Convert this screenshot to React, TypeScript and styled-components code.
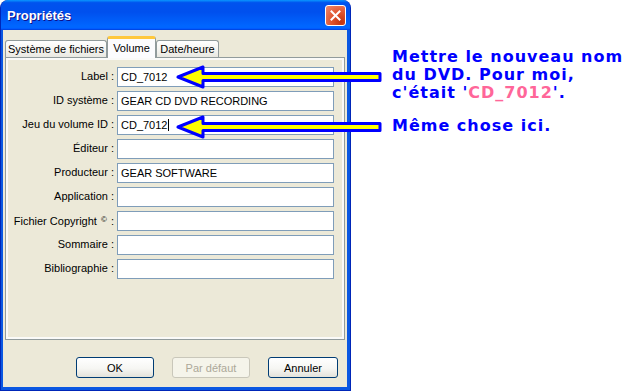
import React from "react";
import styled, { createGlobalStyle } from "styled-components";

const GlobalStyle = createGlobalStyle`
  html, body { margin: 0; padding: 0; background: #fff; }
  body { font-family: "Liberation Sans", Arial, sans-serif; }
`;

const Page = styled.div`
  position: relative;
  width: 624px;
  height: 392px;
  display: flex;
  align-items: flex-start;
  background: #fff;
  overflow: hidden;
`;

const Window = styled.div`
  width: 351px;
  height: 391px;
  box-sizing: border-box;
  display: flex;
  flex-direction: column;
  border-radius: 8px 8px 0 0;
  border: 1px solid #0026b8;
  border-top: none;
  background: #0a57e2;
  overflow: hidden;
`;

const TitleBar = styled.div`
  height: 30px;
  flex: none;
  display: flex;
  align-items: center;
  justify-content: space-between;
  padding: 0 4px 0 6px;
  border-radius: 7px 7px 0 0;
  background: linear-gradient(
    to bottom,
    #0997ff 0%,
    #0053ee 9%,
    #0050ee 40%,
    #0066ff 86%,
    #0066ff 92%,
    #005bff 95%,
    #003dd7 100%
  );
`;

const Title = styled.span`
  color: #fff;
  font: bold 13px "Liberation Sans", Arial, sans-serif;
  text-shadow: 1px 1px 0 #0f1089;
`;

const CloseButton = styled.div`
  width: 21px;
  height: 21px;
  box-sizing: border-box;
  border: 1px solid #fff;
  border-radius: 3px;
  background: radial-gradient(circle at 80% 85%, #c23410 0%, #e0552f 45%, #ef8a70 100%);
  display: flex;
  align-items: center;
  justify-content: center;
`;

const Client = styled.div`
  flex: 1;
  margin: 0 3px 3px 2px;
  background: #ece9d8;
  display: flex;
  flex-direction: column;
`;

const Tabs = styled.div`
  height: 21px;
  display: flex;
  align-items: flex-end;
  padding: 6px 0 0 2px;
  position: relative;
  z-index: 1;
`;

const Tab = styled.div<{ $active?: boolean; $w: number }>`
  width: ${(p) => p.$w}px;
  box-sizing: border-box;
  height: ${(p) => (p.$active ? 22 : 17)}px;
  margin-bottom: ${(p) => (p.$active ? -1 : 0)}px;
  display: flex;
  align-items: center;
  justify-content: center;
  font-size: 11px;
  color: #000;
  border: 1px solid #919b9c;
  border-bottom: none;
  border-radius: 3px 3px 0 0;
  padding-bottom: ${(p) => (p.$active ? 2 : 0)}px;
  background: ${(p) =>
    p.$active
      ? "#fcfcfe"
      : "linear-gradient(to bottom, #ffffff 0%, #f3f3ef 60%, #e9e8e1 100%)"};
  border-top: ${(p) => (p.$active ? "3px solid #ffc83c" : "1px solid #919b9c")};
  white-space: nowrap;
`;

const Panel = styled.div`
  height: 283px;
  margin: 0 2px;
  box-sizing: border-box;
  border: 1px solid #919b9c;
  background: #ece9d8;
  box-shadow: inset 0 0 0 2px #fafaf8;
`;

const Form = styled.div`
  display: grid;
  grid-template-columns: 108px 217px;
  grid-auto-rows: 20px;
  column-gap: 3px;
  row-gap: 4px;
  padding-top: 9px;
`;

const Label = styled.div`
  font-size: 11px;
  line-height: 18px;
  text-align: right;
  white-space: nowrap;
  color: #000;
`;

const Sup = styled.span`
  font-size: 8px;
  vertical-align: 3px;
  margin: 0 1px;
`;

const Field = styled.div`
  box-sizing: border-box;
  border: 1px solid #7f9db9;
  background: #fff;
  font-size: 11px;
  line-height: 18px;
  padding-left: 3px;
  color: #000;
  white-space: nowrap;
`;

const Caret = styled.span`
  display: inline-block;
  width: 1px;
  height: 12px;
  background: #000;
  vertical-align: -2px;
  margin-left: 1px;
`;

const ButtonRow = styled.div`
  display: flex;
  justify-content: flex-end;
  gap: 18px;
  margin-top: 17px;
  padding-right: 9px;
`;

const Button = styled.div<{ $w: number; $disabled?: boolean }>`
  width: ${(p) => p.$w}px;
  height: 21px;
  box-sizing: border-box;
  border: 1px solid ${(p) => (p.$disabled ? "#c9c7ba" : "#003c74")};
  border-radius: 3px;
  background: ${(p) =>
    p.$disabled
      ? "#f5f4ea"
      : "linear-gradient(to bottom, #ffffff 0%, #f6f6f3 55%, #e3e2da 100%)"};
  color: ${(p) => (p.$disabled ? "#aca899" : "#000")};
  font-size: 11px;
  display: flex;
  align-items: center;
  justify-content: center;
`;

const Notes = styled.div`
  margin-left: 41px;
  padding-top: 48px;
  font: bold 16px "DejaVu Sans", Verdana, sans-serif;
  letter-spacing: 1px;
  line-height: 18px;
  color: #0000ff;
`;

const Note = styled.div`
  margin-bottom: 15px;
`;

const Line = styled.div`
  white-space: nowrap;
`;

const Pink = styled.span`
  color: #ff6699;
`;

const ArrowWrap = styled.div<{ $top: number }>`
  position: absolute;
  left: 175px;
  top: ${(p) => p.$top}px;
  width: 208px;
  height: 26px;
  line-height: 0;
`;

function Arrow({ top }: { top: number }) {
  return (
    <ArrowWrap $top={top}>
      <svg width="208" height="26" viewBox="0 0 208 26">
        <polygon
          points="3,13 28,3 28,9.5 205,9.5 205,16.5 28,16.5 28,23"
          fill="#ffff00"
          stroke="#0000ff"
          strokeWidth="3"
          strokeLinejoin="round"
        />
      </svg>
    </ArrowWrap>
  );
}

const rows = [
  { label: "Label :", value: "CD_7012" },
  { label: "ID système :", value: "GEAR CD DVD RECORDING" },
  { label: "Jeu du volume ID :", value: "CD_7012", caret: true },
  { label: "Éditeur :", value: "" },
  { label: "Producteur :", value: "GEAR SOFTWARE" },
  { label: "Application :", value: "" },
  { label: "Fichier Copyright", sup: true, value: "" },
  { label: "Sommaire :", value: "" },
  { label: "Bibliographie :", value: "" },
];

export default function App() {
  return (
    <Page>
      <GlobalStyle />
      <Window>
        <TitleBar>
          <Title>Propriétés</Title>
          <CloseButton>
            <svg width="11" height="11" viewBox="0 0 11 11">
              <path d="M1.5 1.5 L9.5 9.5 M9.5 1.5 L1.5 9.5" stroke="#fff" strokeWidth="2" strokeLinecap="square" />
            </svg>
          </CloseButton>
        </TitleBar>
        <Client>
          <Tabs>
            <Tab $w={102}>Système de fichiers</Tab>
            <Tab $w={49} $active>Volume</Tab>
            <Tab $w={63}>Date/heure</Tab>
          </Tabs>
          <Panel>
            <Form>
              {rows.map((r) => (
                <React.Fragment key={r.label}>
                  <Label>
                    {r.label}
                    {r.sup ? (
                      <>
                        {" "}
                        <Sup>©</Sup> :
                      </>
                    ) : null}
                  </Label>
                  <Field>
                    {r.value}
                    {r.caret ? <Caret /> : null}
                  </Field>
                </React.Fragment>
              ))}
            </Form>
          </Panel>
          <ButtonRow>
            <Button $w={78}>OK</Button>
            <Button $w={78} $disabled>Par défaut</Button>
            <Button $w={70}>Annuler</Button>
          </ButtonRow>
        </Client>
      </Window>
      <Notes>
        <Note>
          <Line>Mettre le nouveau nom</Line>
          <Line>du DVD. Pour moi,</Line>
          <Line>
            c'était '<Pink>CD_7012</Pink>'.
          </Line>
        </Note>
        <Note>
          <Line>Même chose ici.</Line>
        </Note>
      </Notes>
      <Arrow top={64} />
      <Arrow top={114} />
    </Page>
  );
}
